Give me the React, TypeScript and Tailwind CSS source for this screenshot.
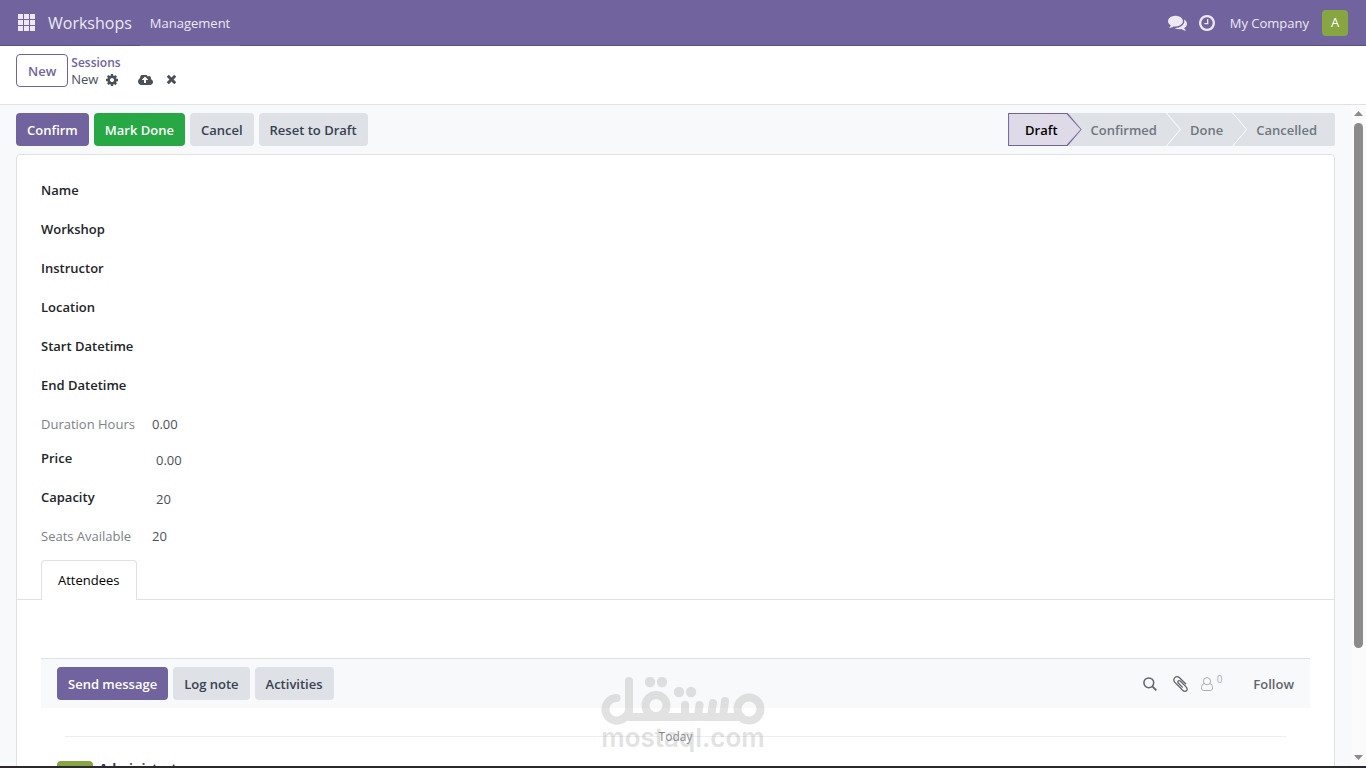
import React, { useState } from "react";

type IconProps = { className?: string };

const CommentsIcon = ({ className }: IconProps) => (
  <svg className={className} viewBox="0 0 1792 1792" fill="currentColor" aria-hidden="true">
    <path d="M1408 768q0 139-94 257t-256.5 186.5-353.5 68.5q-86 0-176-16-124 88-278 128-36 9-86 16h-3q-11 0-20.5-8t-11.5-21q-1-3-1-6.5t.5-6.5 2-6l2.5-5 3.5-5.5 4-5 4.5-5 4-4.5q5-6 23-25t26-29.5 22.5-29 25-38.5 20.5-44q-124-72-195-177t-71-224q0-139 94-257t256.500-186.500 353.500-68.500 353.500 68.500 256.500 186.500 94 257zm384 256q0 120-71 224.500t-195 176.500q10 24 20.500 44t25 38.500 22.500 29 26 29.500 23 25q1 1 4 4.500t4.500 5 4 5 3.500 5.500l2.500 5 2 6 .5 6.500-1 6.500q-3 14-13 22t-22 7q-50-7-86-16-154-40-278-128-90 16-176 16-271 0-472-132 58 4 88 4 161 0 309-45t264-129q125-92 192-212t67-254q0-77-23-152 129 71 204 178t75 230z" />
  </svg>
);

const ClockIcon = ({ className }: IconProps) => (
  <svg className={className} viewBox="128 128 1536 1536" fill="currentColor" aria-hidden="true">
    <path d="M1024 544v448q0 14-9 23t-23 9h-320q-14 0-23-9t-9-23v-64q0-14 9-23t23-9h224v-352q0-14 9-23t23-9h64q14 0 23 9t9 23zm416 352q0-148-73-273t-198-198-273-73-273 73-198 198-73 273 73 273 198 198 273 73 273-73 198-198 73-273zm224 0q0 209-103 385.500t-279.500 279.500-385.500 103-385.500-103-279.500-279.500-103-385.500 103-385.500 279.500-279.500 385.500-103 385.500 103 279.500 279.500 103 385.500z" />
  </svg>
);

const CogIcon = ({ className }: IconProps) => (
  <svg className={className} viewBox="128 128 1536 1536" fill="currentColor" aria-hidden="true">
    <path d="M1152 896q0-106-75-181t-181-75-181 75-75 181 75 181 181 75 181-75 75-181zm512-109v222q0 12-8 23t-20 13l-185 28q-19 54-39 91 35 50 107 138 10 12 10 25t-9 23q-27 37-99 108t-94 71q-12 0-26-9l-138-108q-44 23-91 38-16 136-29 186-7 28-36 28h-222q-14 0-24.500-8.500t-11.500-21.500l-28-184q-49-16-90-37l-141 107q-10 9-25 9-14 0-25-11-126-114-165-168-7-10-7-23 0-12 8-23 15-21 51-66.500t54-70.500q-27-50-41-99l-183-27q-13-2-21-12.500t-8-23.500v-222q0-12 8-23t19-13l186-28q14-46 39-92-40-57-107-138-10-12-10-24 0-10 9-23 26-36 98.500-107.500t94.500-71.500q13 0 26 10l138 107q44-23 91-38 16-136 29-186 7-28 36-28h222q14 0 24.500 8.500t11.500 21.500l28 184q49 16 90 37l142-107q9-9 24-9 13 0 25 10 129 119 165 170 7 8 7 22 0 12-8 23-15 21-51 66.500t-54 70.500q26 50 41 98l183 28q13 2 21 12.500t8 23.500z" />
  </svg>
);

const CloudUploadIcon = ({ className }: IconProps) => (
  <svg className={className} viewBox="-64 256 1920 1280" fill="currentColor" aria-hidden="true">
    <path d="M1216 864q0-14-9-23l-352-352q-9-9-23-9t-23 9l-351 351q-10 12-10 24 0 14 9 23t23 9h224v352q0 13 9.500 22.500t22.500 9.500h192q13 0 22.500-9.500t9.500-22.500v-352h224q13 0 22.500-9.500t9.500-22.500zm640 288q0 159-112.500 271.500t-271.500 112.500h-1088q-185 0-316.500-131.500t-131.500-316.500q0-130 70-240t188-165q-2-30-2-43 0-212 150-362t362-150q156 0 285.500 87t188.500 231q71-62 166-62 106 0 181 75t75 181q0 76-41 138 130 31 213.500 135.500t83.500 238.500z" />
  </svg>
);

const TimesIcon = ({ className }: IconProps) => (
  <svg className={className} viewBox="302 366 1188 1188" fill="currentColor" aria-hidden="true">
    <path d="M1490 1322q0 40-28 68l-136 136q-28 28-68 28t-68-28l-294-294-294 294q-28 28-68 28t-68-28l-136-136q-28-28-28-68t28-68l294-294-294-294q-28-28-28-68t28-68l136-136q28-28 68-28t68 28l294 294 294-294q28-28 68-28t68 28l136 136q28 28 28 68t-28 68l-294 294 294 294q28 28 28 68z" />
  </svg>
);

const PaperclipIcon = ({ className }: IconProps) => (
  <svg className={className} viewBox="196 128 1400 1532" fill="currentColor" aria-hidden="true">
    <path d="M1596 1385q0 117-79 196t-196 79q-135 0-235-100l-777-776q-113-115-113-271 0-159 110-270t269-111q158 0 273 113l605 606q10 10 10 22 0 16-30.500 46.500t-46.500 30.500q-13 0-23-10l-606-607q-79-77-181-77-106 0-179 75t-73 181q0 105 76 181l776 777q63 63 145 63 64 0 106-42t42-106q0-82-63-145l-581-581q-26-24-60-24-29 0-48 19t-19 48q0 32 25 59l410 410q10 10 10 22 0 16-31 47t-47 31q-12 0-22-10l-410-410q-63-61-63-149 0-82 57-139t139-57q88 0 149 63l581 581q100 98 100 235z" />
  </svg>
);

const SearchIcon = ({ className }: IconProps) => (
  <svg className={className} viewBox="0 0 14 14" fill="none" stroke="currentColor" aria-hidden="true">
    <circle cx="5.800" cy="5.800" r="4.900" strokeWidth="1.500" />
    <path d="M9.300 9.300 13.300 13.300" strokeWidth="1.900" />
  </svg>
);

const UserIcon = ({ className }: IconProps) => (
  <svg className={className} viewBox="0 0 12 14" fill="none" stroke="currentColor" strokeWidth="1" aria-hidden="true">
    <circle cx="6" cy="4.200" r="3.600" />
    <path d="M3.100 6.600C1.300 7 .5 8.600 .5 10.900c0 1.700 .9 2.600 2.200 2.600h6.600c1.300 0 2.200-.9 2.200-2.600 0-2.300-.8-3.900-2.600-4.300" />
  </svg>
);

const AppsIcon = ({ className }: IconProps) => (
  <svg className={className} viewBox="0 0 17 17" fill="currentColor" aria-hidden="true">
    {[0, 6, 12].map((y) => [0, 6, 12].map((x) => <rect key={`${x}-${y}`} x={x} y={y} width="5" height="5" />))}
  </svg>
);

const Watermark = () => (
  <div className="pointer-events-none absolute bottom-[14px] left-1/2 flex -translate-x-1/2 flex-col items-center text-[#808080] opacity-22">
    <svg className="h-12 w-[164px] overflow-visible" viewBox="0 0 164 48" fill="none" stroke="currentColor" aria-label="مستقل" role="img">
      <path
        d="M15.500 22A11.300 11.300 0 1 0 24 41H140M28 5V34Q28 38 24 41M84 29V40M98.500 29L97 40M112 27L110 40M124 25L122 40"
        strokeWidth="8"
        strokeLinecap="round"
        strokeLinejoin="round"
      />
      <circle cx="55" cy="29.500" r="10.500" strokeWidth="8" />
      <circle cx="148" cy="33" r="11.500" strokeWidth="8" />
      <g fill="currentColor" stroke="none">
        <circle cx="49" cy="6" r="5.200" />
        <circle cx="61" cy="6" r="5.200" />
        <circle cx="78" cy="16" r="5.200" />
        <circle cx="90" cy="16" r="5.200" />
      </g>
    </svg>
    <span className="font-['Inter',sans-serif] text-[26px] leading-7 font-semibold">mostaql.com</span>
  </div>
);

type ButtonProps = { children: React.ReactNode; tone?: "primary" | "success" | "secondary" };

const tones = {
  primary: "bg-[#71639e] text-white",
  success: "bg-[#28a745] text-white",
  secondary: "bg-[#dee2e6] text-[#374151]",
};

const Button = ({ children, tone = "secondary" }: ButtonProps) => (
  <button type="button" className={`h-[33px] rounded px-[11px] pt-0.5 font-semibold whitespace-nowrap ${tones[tone]}`}>
    {children}
  </button>
);

const stages = ["Draft", "Confirmed", "Done", "Cancelled"];
const stageLayers = ["z-40", "z-30 -ml-[14px]", "z-20 -ml-[14px]", "z-10 -ml-[14px]"];
const arrow = "[clip-path:polygon(0_0,calc(100%-14px)_0,100%_50%,calc(100%-14px)_100%,0_100%)]";

const StatusBar = () => (
  <div className="isolate flex" role="radiogroup" aria-label="Status">
    {stages.map((name, i) => {
      const kind = i === 0 ? "active" : i === stages.length - 1 ? "last" : "middle";
      const outer = {
        active: `bg-[#71639e] p-px text-black ${arrow}`,
        middle: `bg-white pr-px text-[#6f767e] ${arrow}`,
        last: "rounded-r-xs bg-[#dee2e6] text-[#6f767e]",
      }[kind];
      const inner = {
        active: `bg-[#dedae8] pr-[23px] pl-4 ${arrow}`,
        middle: `bg-[#dee2e6] pr-[23px] pl-[23px] ${arrow}`,
        last: "pr-[18px] pl-[23px]",
      }[kind];
      return (
        <button
          key={name}
          type="button"
          role="radio"
          aria-checked={i === 0}
          className={`relative h-[33px] font-semibold ${stageLayers[i]} ${outer}`}
        >
          <span className={`flex h-full items-center pt-0.5 ${inner}`}>{name}</span>
        </button>
      );
    })}
  </div>
);

type Field = { id: string; label: string; value: string; readOnly?: boolean };

const fields: Field[] = [
  { id: "name", label: "Name", value: "" },
  { id: "workshop", label: "Workshop", value: "" },
  { id: "instructor", label: "Instructor", value: "" },
  { id: "location", label: "Location", value: "" },
  { id: "start", label: "Start Datetime", value: "" },
  { id: "end", label: "End Datetime", value: "" },
  { id: "duration", label: "Duration Hours", value: "0.00", readOnly: true },
  { id: "price", label: "Price", value: "0.00" },
  { id: "capacity", label: "Capacity", value: "20" },
  { id: "seats", label: "Seats Available", value: "20", readOnly: true },
];

const FieldRow = ({ id, label, value, readOnly }: Field) => {
  const [text, setText] = useState(value);
  return readOnly ? (
    <div className="flex h-[34px] items-start">
      <label htmlFor={id} className="w-[111px] shrink-0 text-[#7c8188]">{label}</label>
      <output id={id} className="text-[#495057]">{text}</output>
    </div>
  ) : (
    <div className="flex h-[39px] items-start">
      <label htmlFor={id} className="w-[111px] shrink-0 font-semibold text-[#212529]">{label}</label>
      <input
        id={id}
        value={text}
        onChange={(e) => setText(e.target.value)}
        className="mt-0.5 w-full max-w-[480px] min-w-0 bg-transparent px-1 text-[#495057] outline-none"
      />
    </div>
  );
};

export default function App() {
  return (
    <div className="relative flex h-screen flex-col overflow-hidden border-b-2 border-[#2b292d] bg-white font-['Open_Sans',sans-serif] text-[13px] leading-[21px] text-[#374151]">
      <header className="flex h-[46px] shrink-0 items-center border-b border-[#5a4f7f] bg-[#71639e] px-[18px] text-[#ece9f3]">
        <button type="button" aria-label="Home menu"><AppsIcon className="size-[17px]" /></button>
        <a href="#workshops" className="ml-[13px] pt-0.5 text-base leading-[21px]">Workshops</a>
        <button type="button" className="-mb-px ml-2 h-[46px] bg-[#71639e] px-2.5">Management</button>
        <div className="ml-auto flex items-center">
          <button type="button" aria-label="Messages"><CommentsIcon className="size-[19px]" /></button>
          <button type="button" aria-label="Activities" className="ml-3"><ClockIcon className="size-4" /></button>
          <button type="button" className="ml-[15px] pt-0.5">My Company</button>
          <button type="button" aria-label="User menu" className="ml-[13px] size-[26px] rounded bg-[#87a540] text-white">A</button>
        </div>
      </header>

      <div className="flex h-[59px] shrink-0 items-start border-b border-[#dee2e6] px-4 pt-2">
        <button type="button" className="h-[33px] rounded border border-[#71639e] px-[11px] pt-0.5 font-semibold text-[#71639e]">New</button>
        <div className="ml-[3px]">
          <a href="#sessions" className="block text-xs leading-[17px] font-semibold text-[#71639e]">Sessions</a>
          <div className="flex items-center leading-[17px] text-[#495057]">
            <span>New</span>
            <button type="button" aria-label="Settings" className="ml-2"><CogIcon className="size-3" /></button>
            <button type="button" aria-label="Save" className="ml-5"><CloudUploadIcon className="h-2.5 w-[15px]" /></button>
            <button type="button" aria-label="Discard" className="ml-[14px]"><TimesIcon className="size-[9px]" /></button>
          </div>
        </div>
      </div>

      <div className="flex min-h-0 flex-1">
        <main className="min-w-0 flex-1 overflow-hidden bg-[#f8f9fa] px-4 pt-2">
          <div className="flex items-center justify-between">
            <div className="flex gap-[5px]">
              <Button tone="primary">Confirm</Button>
              <Button tone="success">Mark Done</Button>
              <Button>Cancel</Button>
              <Button>Reset to Draft</Button>
            </div>
            <StatusBar />
          </div>

          <section className="mt-2 rounded-t border border-[#dee2e6] bg-white px-6 pt-[25px]">
            <form onSubmit={(e) => e.preventDefault()}>
              {fields.map((f) => <FieldRow key={f.id} {...f} />)}
            </form>

            <div className="-mx-6 border-b border-[#dee2e6] px-6" role="tablist">
              <button
                type="button"
                role="tab"
                aria-selected="true"
                className="-mb-px block h-10 rounded-t border border-b-0 border-[#dee2e6] bg-white px-4 text-black"
              >
                Attendees
              </button>
            </div>

            <div className="mt-[58px] flex h-[50px] items-center border-t border-[#dee2e6] bg-[#f8f9fa] px-4">
              <div className="flex gap-[5px]">
                <Button tone="primary">Send message</Button>
                <Button>Log note</Button>
                <Button>Activities</Button>
              </div>
              <div className="ml-auto flex items-center text-[#5f666d]">
                <button type="button" aria-label="Search messages"><SearchIcon className="size-[14px]" /></button>
                <button type="button" aria-label="Attach files" className="ml-4"><PaperclipIcon className="h-4 w-[15px]" /></button>
                <button type="button" aria-label="Followers" className="ml-[13px] flex items-center text-[#a9aeb4]">
                  <UserIcon className="h-[14px] w-3" />
                  <sup className="ml-1 text-[10px]">0</sup>
                </button>
                <button type="button" className="ml-[31px] pt-0.5 font-semibold">Follow</button>
              </div>
            </div>

            <div className="mx-6 mt-[18px] flex items-center">
              <hr className="flex-1 border-[#eceef0]" />
              <span className="text-xs leading-[21px] text-[#868b91]">Today</span>
              <hr className="flex-1 border-[#eceef0]" />
            </div>

            <article className="mt-[14px] flex px-4">
              <div className="size-9 shrink-0 rounded bg-[#87a540]" />
              <strong className="ml-1.5 leading-[14px] font-bold">Administrator</strong>
            </article>
          </section>
        </main>

        <div className="flex w-[15px] shrink-0 flex-col items-center bg-[#fbfbfb] py-1.5 text-[#8b8b8b]" aria-hidden="true">
          <svg className="h-[5px] w-[9px]" viewBox="0 0 9 5" fill="currentColor"><path d="M4.500 0 9 5H0z" /></svg>
          <div className="mt-[7px] flex w-full flex-1 justify-center">
            <div className="h-[83%] w-[9px] rounded-full bg-[#8b8b8b]" />
          </div>
          <svg className="h-[5px] w-[9px]" viewBox="0 0 9 5" fill="currentColor"><path d="M0 0h9L4.500 5z" /></svg>
        </div>
      </div>

      <Watermark />
    </div>
  );
}
